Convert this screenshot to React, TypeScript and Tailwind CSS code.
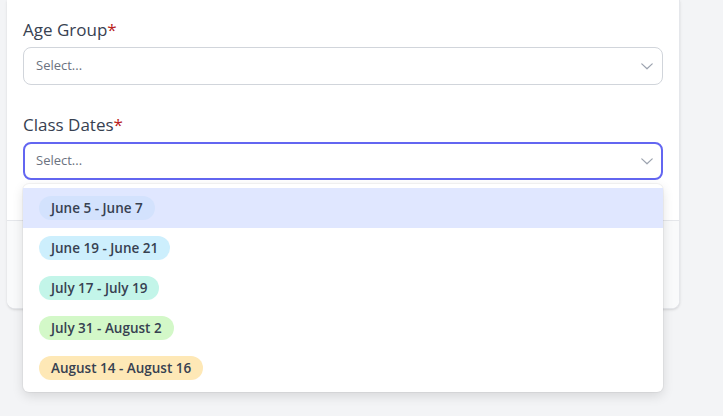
import React from "react";

const font = { fontFamily: '"Open Sans", "Noto Sans", sans-serif' };

function Chevron() {
  return (
    <svg width="12" height="7" viewBox="0 0 12 7" fill="none" className="text-[#9ca3af]">
      <path d="M0.8 0.9 L6 5.8 L11.2 0.9" stroke="currentColor" strokeWidth="1.2" strokeLinecap="round" strokeLinejoin="round" />
    </svg>
  );
}

const options = [
  { label: "June 5 - June 7", bg: "bg-[#d3e2fd]" },
  { label: "June 19 - June 21", bg: "bg-[#cdeffd]" },
  { label: "July 17 - July 19", bg: "bg-[#c3f5e9]" },
  { label: "July 31 - August 2", bg: "bg-[#d3f8c8]" },
  { label: "August 14 - August 16", bg: "bg-[#fee8b6]" },
];

export default function App() {
  return (
    <div className="w-[723px] h-[416px] bg-[#f3f4f6] overflow-hidden" style={font}>
      <div className="ml-[7px] w-[673px] bg-white border-r border-b border-[#e5e7eb] rounded-b-lg shadow-sm relative">
        <div className="px-4 pt-4 pb-10">
          <div className="flex flex-col">
            <label className="text-[17px] leading-[28px] text-[#374151]">
              Age Group<span className="text-[#b91c1c]">*</span>
            </label>
            <div className="mt-[3px] h-[38px] border border-[#d1d5db] rounded-lg flex items-center justify-between pl-3 pr-[9px]">
              <span className="text-[13px] text-[#6b7280]">Select...</span>
              <Chevron />
            </div>
          </div>
          <div className="flex flex-col mt-[26px]">
            <label className="text-[17px] leading-[28px] text-[#374151]">
              Class Dates<span className="text-[#b91c1c]">*</span>
            </label>
            <div className="mt-[3px] h-[38px] border-2 border-[#6366f1] rounded-lg flex items-center justify-between pl-[11px] pr-[8px]">
              <span className="text-[13px] text-[#6b7280]">Select...</span>
              <Chevron />
            </div>
          </div>
        </div>
        <div className="h-[88px] bg-[#f9fafb] border-t border-[#e5e7eb] rounded-b-lg"></div>

        <div className="absolute left-4 top-[184px] w-[640px] bg-white rounded-md shadow-[0_4px_12px_rgba(0,0,0,0.12),0_0_0_1px_rgba(0,0,0,0.04)] py-1">
          {options.map((o, i) => (
            <div key={o.label} className={`h-10 flex items-center pl-4 ${i === 0 ? "bg-[#e0e7ff]" : ""}`}>
              <span className={`${o.bg} rounded-full px-3 h-6 flex items-center text-[13.5px] font-semibold text-[#374151]`}>
                {o.label}
              </span>
            </div>
          ))}
        </div>
      </div>
    </div>
  );
}
